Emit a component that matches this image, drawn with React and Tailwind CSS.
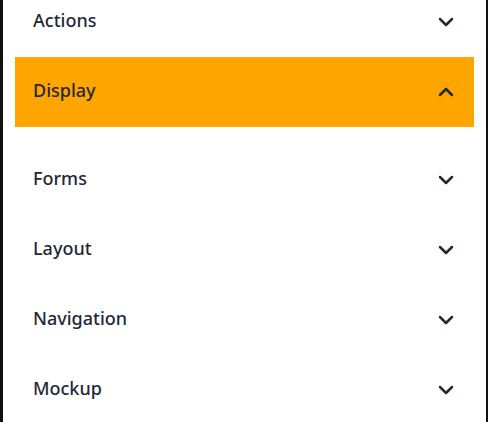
import { ChevronDown, ChevronUp } from 'lucide-react';

const sections = ['Actions', 'Display', 'Forms', 'Layout', 'Navigation', 'Mockup'];

function Row({ label, open }) {
  return (
    <div>
      <button
        className={`flex h-[70px] w-full items-center justify-between pl-[18px] pr-4 text-left ${open ? 'bg-[#ffa500]' : ''}`}
      >
        <span className="pb-1 text-[18px] font-medium leading-[24px] text-[#1f2937]">{label}</span>
        {open ? (
          <ChevronUp size={24} strokeWidth={2.5} className="text-[#1f2937]" />
        ) : (
          <ChevronDown size={24} strokeWidth={2.5} className="text-[#1f2937]" />
        )}
      </button>
      {open && <div className="h-[18px]" />}
    </div>
  );
}

export default function App() {
  return (
    <div
      className="h-[422px] w-[488px] overflow-hidden border-l-[3px] border-r-[2px] border-[#111111] bg-white"
      style={{ fontFamily: '"Noto Sans", "Open Sans", sans-serif' }}
    >
      <div className="-mt-[13px] px-3">
        {sections.map((s) => (
          <Row key={s} label={s} open={s === 'Display'} />
        ))}
      </div>
    </div>
  );
}
